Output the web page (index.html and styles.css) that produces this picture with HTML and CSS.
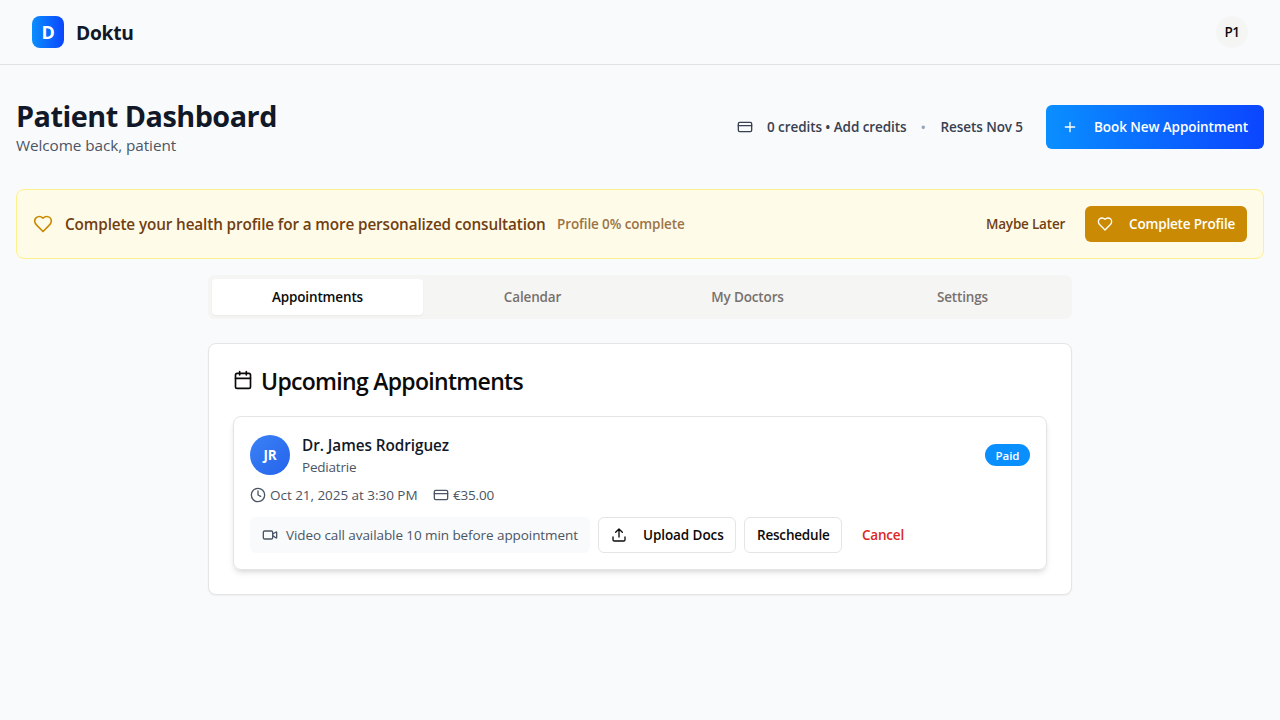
FILE: index.html
```html
<!DOCTYPE html>
<html lang="en">
<head>
<meta charset="utf-8">
<title>Doktu</title>
<link rel="stylesheet" href="styles.css">
</head>
<body>
<header class="topbar">
  <div class="brand"><span class="logo">D</span><span class="brand-name">Doktu</span></div>
  <div class="user">P1</div>
</header>
<main class="page">
  <section class="heading">
    <div>
      <h1 class="title">Patient Dashboard</h1>
      <p class="welcome">Welcome back, patient</p>
    </div>
    <div class="actions">
      <div class="credits">
        <svg class="icon credit-icon" viewBox="0 0 24 24"><rect width="20" height="14" x="2" y="5" rx="2"/><path d="M2 10h20"/></svg>
        <span class="t-credits">0 credits • Add credits</span>
        <span class="dot">•</span>
        <span class="t-resets">Resets Nov 5</span>
      </div>
      <button class="btn book"><svg class="icon" viewBox="0 0 24 24"><path d="M5 12h14M12 5v14"/></svg><span>Book New Appointment</span></button>
    </div>
  </section>
  <section class="banner">
    <svg class="icon heart" viewBox="0 0 24 24"><path d="M19 14c1.49-1.46 3-3.21 3-5.5A5.5 5.5 0 0 0 16.5 3c-1.76 0-3 .5-4.5 2-1.5-1.5-2.74-2-4.5-2A5.5 5.5 0 0 0 2 8.5c0 2.3 1.5 4.05 3 5.5l7 7Z"/></svg>
    <span class="banner-text">Complete your health profile for a more personalized consultation</span>
    <span class="banner-note">Profile 0% complete</span>
    <button class="btn later"><span>Maybe Later</span></button>
    <button class="btn complete"><svg class="icon" viewBox="0 0 24 24"><path d="M19 14c1.49-1.46 3-3.21 3-5.5A5.5 5.5 0 0 0 16.5 3c-1.76 0-3 .5-4.5 2-1.5-1.5-2.74-2-4.5-2A5.5 5.5 0 0 0 2 8.5c0 2.3 1.5 4.05 3 5.5l7 7Z"/></svg><span>Complete Profile</span></button>
  </section>
  <div class="content">
    <nav class="tabs">
      <button class="tab active">Appointments</button>
      <button class="tab">Calendar</button>
      <button class="tab">My Doctors</button>
      <button class="tab">Settings</button>
    </nav>
    <section class="card">
      <h2 class="card-title">
        <svg class="icon" viewBox="0 0 24 24"><path d="M8 2v4M16 2v4"/><rect width="18" height="18" x="3" y="4" rx="2"/><path d="M3 10h18"/></svg>
        <span>Upcoming Appointments</span>
      </h2>
      <article class="appointment">
        <div class="doctor">
          <span class="avatar">JR</span>
          <div class="doctor-info">
            <div class="name">Dr. James Rodriguez</div>
            <div class="specialty">Pediatrie</div>
          </div>
          <span class="badge">Paid</span>
        </div>
        <div class="meta">
          <span class="meta-item date"><svg class="icon" viewBox="0 0 24 24"><circle cx="12" cy="12" r="10"/><path d="M12 6v6l4 2"/></svg><span>Oct 21, 2025 at 3:30 PM</span></span>
          <span class="meta-item"><svg class="icon" viewBox="0 0 24 24"><rect width="20" height="14" x="2" y="5" rx="2"/><path d="M2 10h20"/></svg><span class="price">€35.00</span></span>
        </div>
        <div class="row">
          <div class="video"><svg class="icon" viewBox="0 0 24 24"><path d="m16 13 5.223 3.482a.5.5 0 0 0 .777-.416V7.87a.5.5 0 0 0-.752-.432L16 10.500"/><rect x="2" y="6" width="14" height="12" rx="2"/></svg><span>Video call available 10 min before appointment</span></div>
          <button class="btn outline upload"><svg class="icon" viewBox="0 0 24 24"><path d="M21 15v4a2 2 0 0 1-2 2H5a2 2 0 0 1-2-2v-4M17 8l-5-5-5 5M12 3v12"/></svg><span>Upload Docs</span></button>
          <button class="btn outline reschedule"><span>Reschedule</span></button>
          <button class="btn cancel"><span>Cancel</span></button>
        </div>
      </article>
    </section>
  </div>
</main>
</body>
</html>
```
FILE: styles.css
```css
* { box-sizing: border-box; margin: 0; padding: 0; }
body { background: #f9fafc; color: #0c0a09; font: 13.5px/20px "Open Sans", "Noto Sans", sans-serif; letter-spacing: -.08px; white-space: nowrap; min-height: 720px; }
button { font: inherit; letter-spacing: inherit; color: inherit; border: 0; background: none; }
.icon { width: 16px; height: 16px; fill: none; stroke: currentColor; stroke-width: 2; stroke-linecap: round; stroke-linejoin: round; flex: none; display: block; }

.topbar { height: 65px; border-bottom: 1px solid #e2e1e2; padding: 0 32px; display: flex; align-items: center; justify-content: space-between; }
.brand { display: flex; align-items: center; gap: 12px; }
.logo { width: 32px; height: 32px; border-radius: 8px; background: linear-gradient(90deg, #0a8fff, #0b45ff); color: #fff; font-size: 18px; font-weight: 700; line-height: 32px; text-align: center; }
.brand-name { font-size: 19.2px; line-height: 28px; font-weight: 700; color: #111827; letter-spacing: -.25px; padding-top: 1px; }
.user { width: 32px; height: 32px; border-radius: 50%; background: #f5f5f4; font-weight: 600; line-height: 32px; text-align: center; letter-spacing: -.6px; }

.page { padding: 32px 16px; }
.heading { height: 60px; display: flex; align-items: center; justify-content: space-between; margin-bottom: 32px; }
.title { font-size: 28.8px; line-height: 36px; font-weight: 700; color: #111827; letter-spacing: -.5px; padding-top: 1px; height: 36px; }
.welcome { font-size: 15.3px; line-height: 24px; color: #4b5563; letter-spacing: -.07px; height: 24px; }
.actions { display: flex; align-items: center; gap: 23px; }
.credits { display: flex; align-items: center; color: #374151; font-weight: 600; width: 286px; }
.credit-icon { margin-right: 14px; }
.t-credits { width: 140px; }
.dot { color: #9ca3af; width: 33px; text-align: center; font-size: 13px; }
.t-resets { margin-left: 1px; }

.btn { height: 36px; border-radius: 6px; display: flex; align-items: center; font-weight: 600; }
.book { width: 218px; height: 44px; padding-left: 16px; gap: 16px; color: #fff; background: linear-gradient(90deg, #0a8fff, #0b45ff); letter-spacing: -.08px; }

.banner { height: 70px; border: 1px solid #fef08a; border-radius: 8px; background: #fefce8; padding: 0 16px; display: flex; align-items: center; color: #713f12; margin-bottom: 16px; }
.heart { width: 20px; height: 20px; color: #ca8a04; margin-right: 12px; }
.banner-text { width: 492px; font-size: 15.3px; line-height: 24px; font-weight: 600; letter-spacing: -.13px; }
.banner-note { color: #9b7347; font-weight: 600; flex: 1; letter-spacing: -.12px; }
.later { width: 103px; padding: 0 12px; margin-right: 8px; letter-spacing: -.2px; }
.complete { width: 162px; padding-left: 12px; gap: 16px; color: #fff; background: #ca8a04; letter-spacing: -.17px; }

.content { width: 864px; margin: 0 auto; }
.tabs { height: 44px; background: #f5f5f4; border-radius: 6px; padding: 4px; display: grid; grid-template-columns: repeat(4, 211px); column-gap: 4px; margin-bottom: 24px; }
.tab { border-radius: 4px; color: #78716c; font-weight: 600; letter-spacing: -.15px; }
.active { background: #fff; color: #0c0a09; box-shadow: 0 1px 2px rgba(0,0,0,.05); }

.card { background: #fff; border: 1px solid #e5e5e6; border-radius: 8px; padding: 24px; box-shadow: 0 1px 2px rgba(0,0,0,.05); }
.card-title { height: 24px; margin-bottom: 24px; display: flex; align-items: center; gap: 8px; font-size: 23px; line-height: 24px; font-weight: 600; letter-spacing: -.7px; }
.card-title .icon { width: 20px; height: 20px; }
.card-title span { padding-top: 1px; }
.appointment { border: 1px solid #e5e5e6; border-radius: 8px; padding: 16px; height: 154px; box-shadow: 0 4px 6px -1px rgba(0,0,0,.1), 0 2px 4px -2px rgba(0,0,0,.1); }
.doctor { display: flex; align-items: center; height: 44px; margin-bottom: 8px; }
.avatar { width: 40px; height: 40px; border-radius: 50%; background: linear-gradient(135deg, #3b82f6, #2563eb); color: #fff; font-weight: 700; line-height: 40px; text-align: center; }
.doctor-info { flex: 1; margin-left: 12px; }
.name { font-size: 15.3px; line-height: 24px; font-weight: 600; color: #111827; letter-spacing: -.05px; }
.specialty { color: #4b5563; letter-spacing: -.2px; }
.badge { width: 45px; height: 22px; border-radius: 11px; background: #0a8fff; color: #fff; font-size: 11.5px; font-weight: 600; line-height: 23px; text-align: center; }
.meta { display: flex; color: #4b5563; margin-bottom: 12px; }
.meta-item { display: flex; align-items: center; gap: 4px; }
.date { width: 183px; letter-spacing: -.04px; }
.price { letter-spacing: -.2px; }
.row { display: flex; gap: 8px; }
.video { width: 340px; height: 36px; padding: 0 12px; border-radius: 6px; background: #f9fafb; color: #4b5563; display: flex; align-items: center; gap: 8px; }
.outline { border: 1px solid #e5e5e6; background: #fff; padding-left: 12px; }
.upload { width: 138px; gap: 16px; }
.reschedule { width: 98px; letter-spacing: -.2px; }
.cancel { color: #dc2626; padding-left: 12px; letter-spacing: -.2px; }
```
